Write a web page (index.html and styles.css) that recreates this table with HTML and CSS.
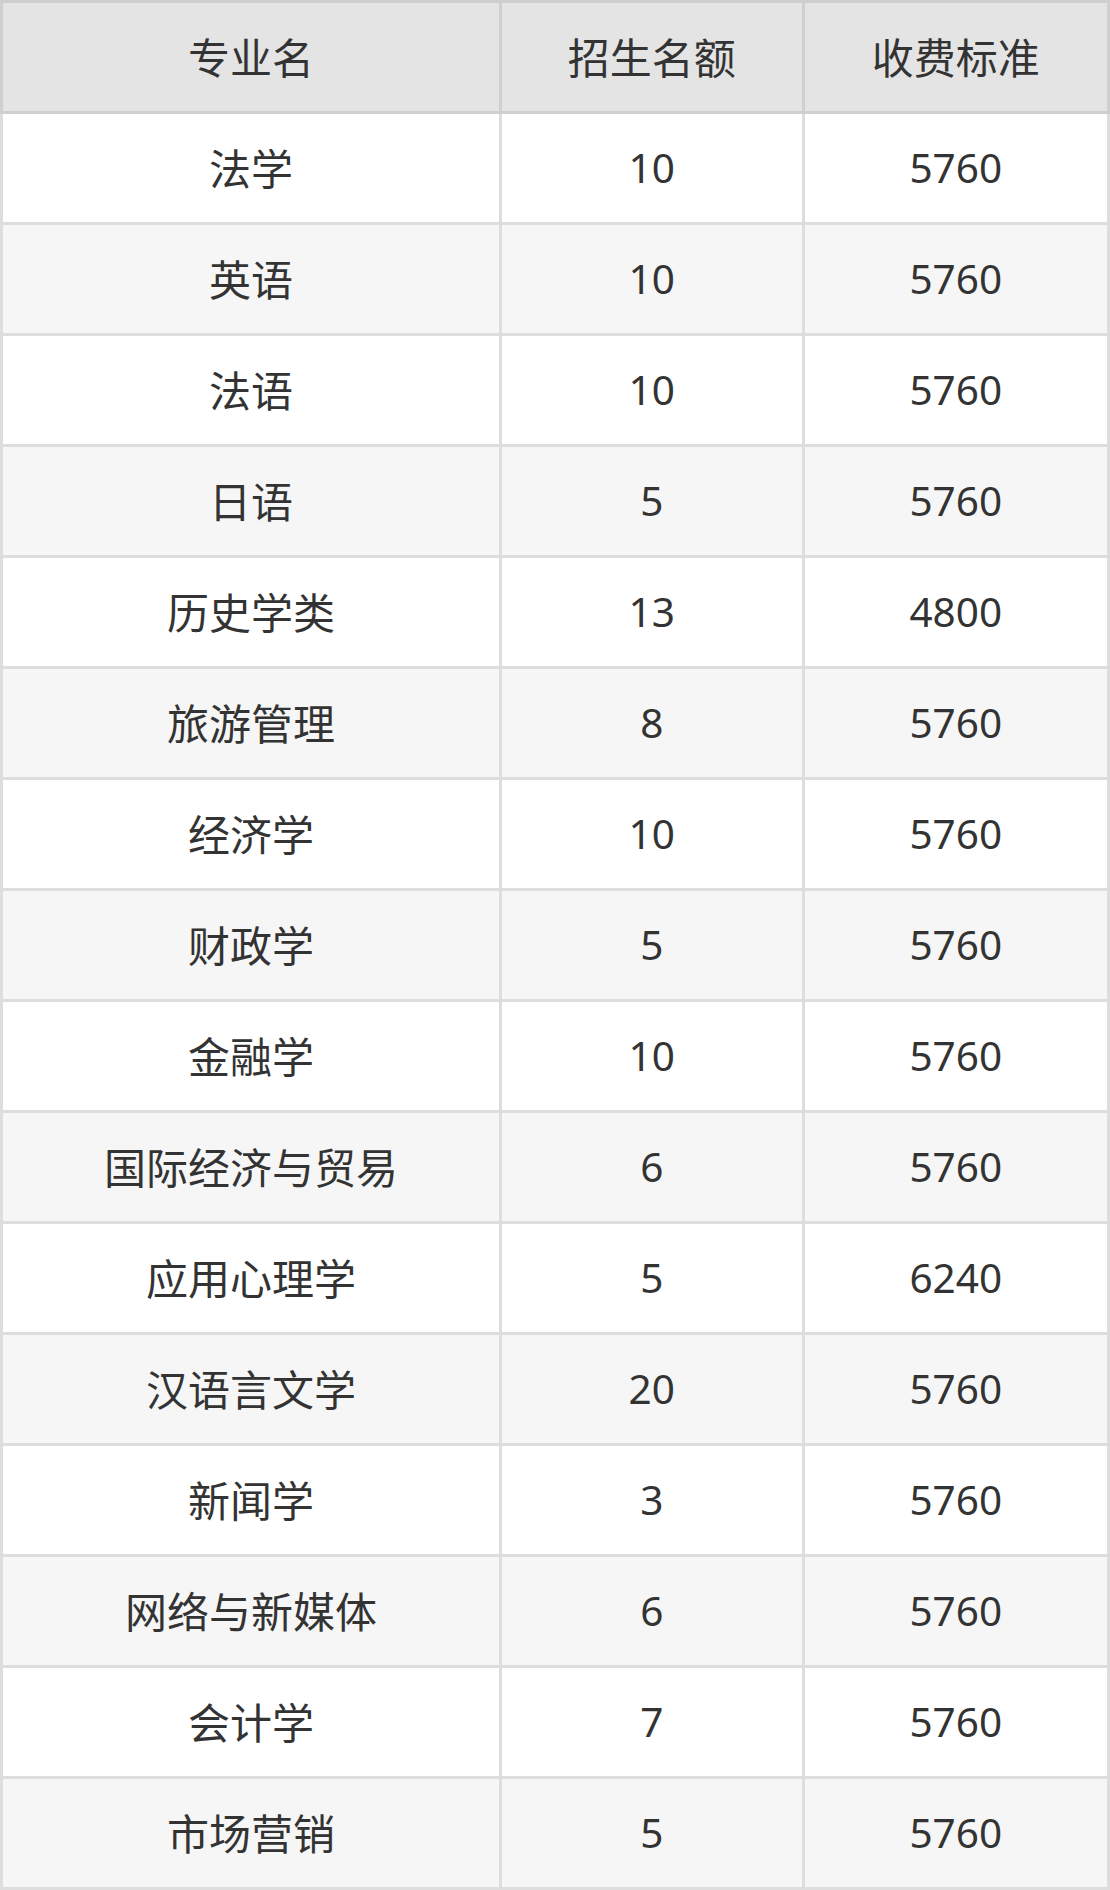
FILE: index.html
```html
<!DOCTYPE html>
<html lang="zh-CN">
<head>
<meta charset="utf-8">
<title>专业招生</title>
<link rel="stylesheet" href="styles.css">
</head>
<body>
<table class="major-table">
  <thead>
    <tr>
      <th class="c1">专业名</th>
      <th class="c2">招生名额</th>
      <th class="c3">收费标准</th>
    </tr>
  </thead>
  <tbody>
    <tr><td>法学</td><td class="num">10</td><td class="num">5760</td></tr>
    <tr><td>英语</td><td class="num">10</td><td class="num">5760</td></tr>
    <tr><td>法语</td><td class="num">10</td><td class="num">5760</td></tr>
    <tr><td>日语</td><td class="num">5</td><td class="num">5760</td></tr>
    <tr><td>历史学类</td><td class="num">13</td><td class="num">4800</td></tr>
    <tr><td>旅游管理</td><td class="num">8</td><td class="num">5760</td></tr>
    <tr><td>经济学</td><td class="num">10</td><td class="num">5760</td></tr>
    <tr><td>财政学</td><td class="num">5</td><td class="num">5760</td></tr>
    <tr><td>金融学</td><td class="num">10</td><td class="num">5760</td></tr>
    <tr><td>国际经济与贸易</td><td class="num">6</td><td class="num">5760</td></tr>
    <tr><td>应用心理学</td><td class="num">5</td><td class="num">6240</td></tr>
    <tr><td>汉语言文学</td><td class="num">20</td><td class="num">5760</td></tr>
    <tr><td>新闻学</td><td class="num">3</td><td class="num">5760</td></tr>
    <tr><td>网络与新媒体</td><td class="num">6</td><td class="num">5760</td></tr>
    <tr><td>会计学</td><td class="num">7</td><td class="num">5760</td></tr>
    <tr><td>市场营销</td><td class="num">5</td><td class="num">5760</td></tr>
  </tbody>
</table>
</body>
</html>
```
FILE: styles.css
```css
html, body {
  margin: 0;
  padding: 0;
  background: #ffffff;
}

.major-table {
  width: 1110px;
  border-collapse: collapse;
  table-layout: fixed;
  font-family: "Noto Sans", "Noto Sans CJK SC", sans-serif;
  font-size: 42px;
  color: #333333;
  border: 3px solid #dddddd;
}

.major-table th,
.major-table td {
  height: 111px;
  box-sizing: border-box;
  padding: 0 0 4px 0;
  text-align: center;
  vertical-align: middle;
  font-weight: normal;
  border: 3px solid #dddddd;
  white-space: nowrap;
}

.major-table th {
  background: #e4e4e4;
  border-color: #cfcfcf;
}

.major-table .num {
  font-size: 40.5px;
  padding-bottom: 2px;
}

.major-table .c1 { width: 495px; }
.major-table .c2 { width: 300px; }
.major-table .c3 { width: 303px; }

.major-table tbody tr:nth-child(even) td {
  background: #f6f6f6;
}
```
